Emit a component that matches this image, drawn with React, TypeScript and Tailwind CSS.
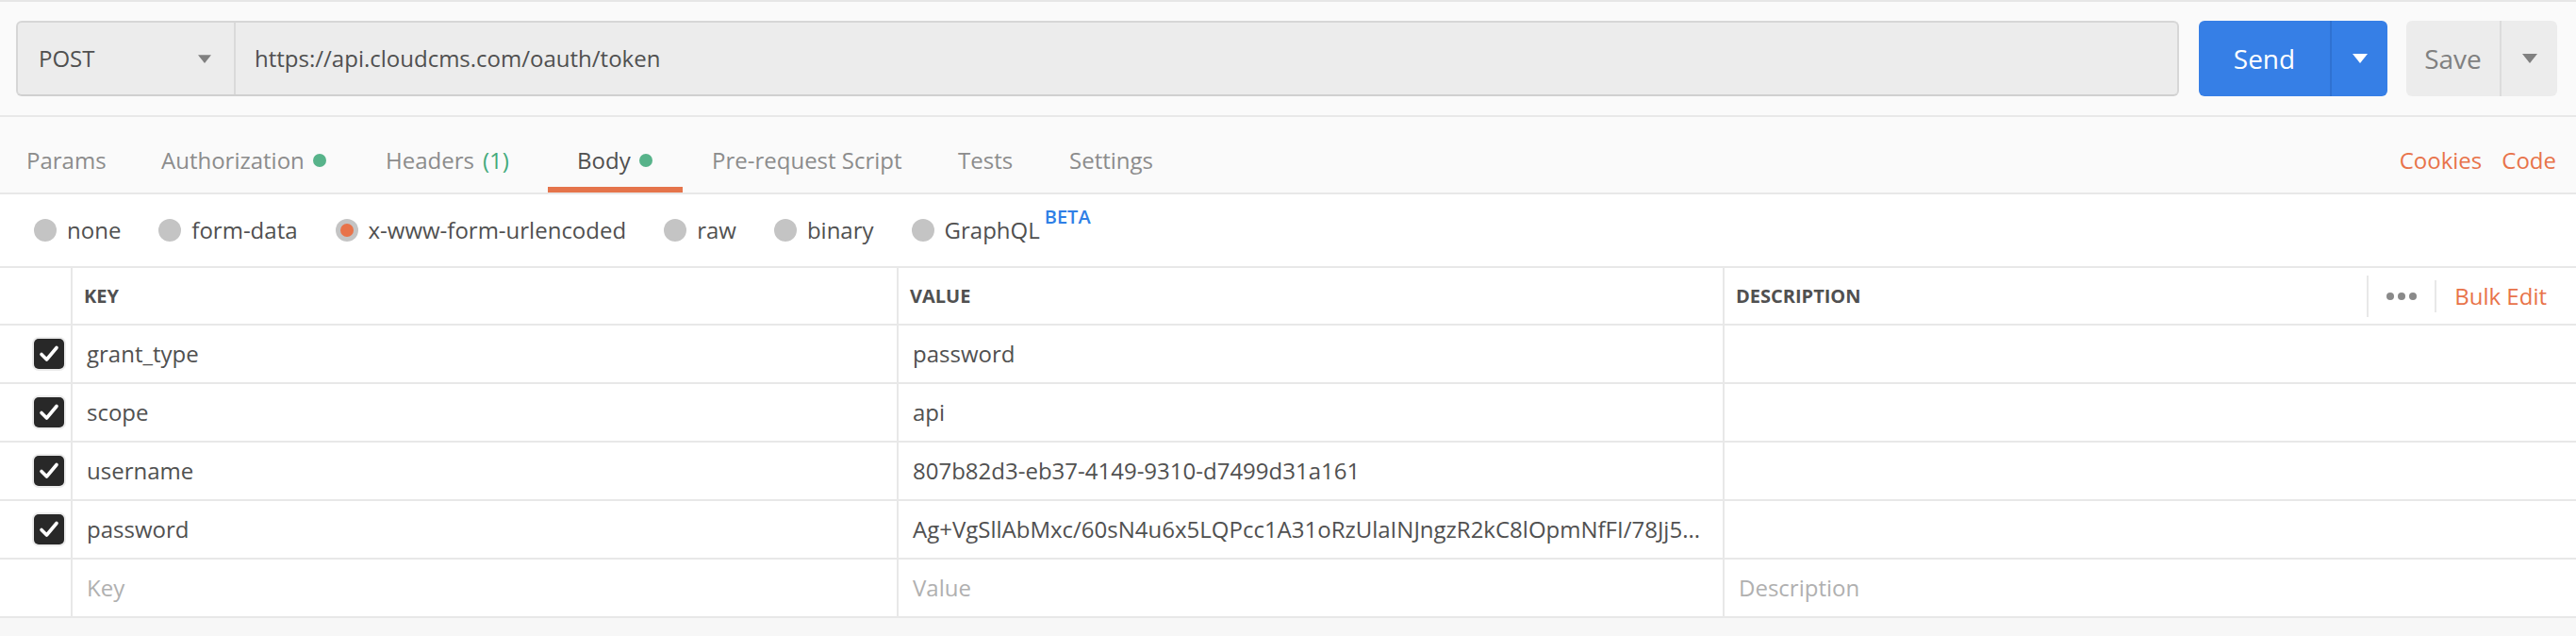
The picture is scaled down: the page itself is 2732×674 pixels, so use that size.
import React from "react";

const Tri = ({ color, w = 16, h = 10 }: { color: string; w?: number; h?: number }) => (
  <svg width={w} height={h} viewBox="0 0 16 10">
    <polygon points="0,0 16,0 8,10" fill={color} />
  </svg>
);

const Check = () => (
  <div className="w-[32px] h-[32px] rounded-[5px] bg-[#282828] ring-2 ring-[#ececec] flex items-center justify-center">
    <svg width="22" height="20" viewBox="0 0 22 20">
      <polyline points="3,10.5 8.5,16 19,3.5" fill="none" stroke="#ffffff" strokeWidth="3.6" strokeLinecap="round" strokeLinejoin="round" />
    </svg>
  </div>
);

const Radio = ({ label, selected, beta }: { label: string; selected?: boolean; beta?: boolean }) => (
  <div className="flex items-center mr-[40px]">
    <div className="w-[24px] h-[24px] rounded-full bg-[#c4c4c4] flex items-center justify-center">
      {selected && <div className="w-[14px] h-[14px] rounded-full bg-[#e8734a]" />}
    </div>
    <span className="ml-[11px] text-[24px] leading-[32px] text-[#505050]">{label}</span>
    {beta && (
      <span className="ml-[5px] self-start -mt-[10px] text-[20px] leading-[24px] font-semibold text-[#2f7fe6]">BETA</span>
    )}
  </div>
);

const Tab = ({
  label,
  active,
  dot,
  count,
  w,
}: {
  label: string;
  active?: boolean;
  dot?: boolean;
  count?: string;
  w: string;
}) => (
  <div
    className={`${w} h-[80px] pl-[31px] pt-[30px] flex items-start whitespace-nowrap border-b-[6px] ${
      active ? "border-[#e5744b]" : "border-transparent"
    }`}
  >
    <span className={`text-[24px] leading-[32px] ${active ? "text-[#505050]" : "text-[#8c8c8c]"}`}>{label}</span>
    {count && <span className="ml-[9px] text-[24px] leading-[32px] text-[#44aa7c]">{count}</span>}
    {dot && <span className="ml-[9px] mt-[9px] w-[14px] h-[14px] rounded-full bg-[#57b38a]" />}
  </div>
);

const rows = [
  { k: "grant_type", v: "password" },
  { k: "scope", v: "api" },
  { k: "username", v: "807b82d3-eb37-4149-9310-d7499d31a161" },
  { k: "password", v: "Ag+VgSllAbMxc/60sN4u6x5LQPcc1A31oRzUlaINJngzR2kC8lOpmNfFI/78Jj5..." },
];

export default function App() {
  return (
    <div className="w-[2732px] h-[674px] overflow-hidden bg-[#fafafa] border-t-2 border-[#e6e6e6] font-['Open_Sans',sans-serif]">
      {/* URL row */}
      <div className="h-[122px] flex items-center pl-[17px] pr-[20px] border-b-2 border-[#e8e8e8]">
        <div className="flex-1 h-[80px] flex rounded-[6px] border-2 border-[#d6d6d6] border-b-[#d0d0d0] bg-[#ececec]">
          <div className="w-[231px] flex items-center justify-between pl-[22px] pr-[24px] border-r-2 border-[#d9d9d9]">
            <span className="text-[24px] text-[#505050]">POST</span>
            <Tri color="#808080" w={14} h={9} />
          </div>
          <div className="flex items-center pl-[20px] text-[24px] text-[#505050]">https://api.cloudcms.com/oauth/token</div>
        </div>
        <div className="ml-[21px] w-[200px] h-[80px] flex rounded-[6px] bg-[#367fe6]">
          <div className="w-[139px] flex items-center justify-center text-[28px] text-white">Send</div>
          <div className="flex-1 flex items-center justify-center border-l-2 border-[#2f72d2]">
            <Tri color="#ffffff" />
          </div>
        </div>
        <div className="ml-[20px] w-[160px] h-[80px] flex rounded-[6px] bg-[#ececec]">
          <div className="w-[99px] flex items-center justify-center text-[28px] text-[#808080]">Save</div>
          <div className="flex-1 flex items-center justify-center border-l-2 border-[#dcdcdc]">
            <Tri color="#808080" />
          </div>
        </div>
      </div>

      {/* Tabs */}
      <div className="h-[82px] flex items-start border-b-2 border-[#e8e8e8]">
        <div className="flex -ml-[3px]">
          <Tab w="w-[143px]" label="Params" />
          <Tab w="w-[238px]" label="Authorization" dot />
          <Tab w="w-[203px]" label="Headers" count="(1)" />
          <Tab w="w-[143px]" label="Body" active dot />
          <Tab w="w-[261px]" label="Pre-request Script" />
          <Tab w="w-[118px]" label="Tests" />
          <Tab w="w-[150px]" label="Settings" />
        </div>
        <div className="ml-auto flex pt-[30px] pr-[21px] text-[24px] leading-[32px] text-[#e8734a]">
          <span>Cookies</span>
          <span className="ml-[21px]">Code</span>
        </div>
      </div>

      {/* Body type radios */}
      <div className="h-[76px] bg-white flex items-center pl-[36px]">
        <Radio label="none" />
        <Radio label="form-data" />
        <Radio label="x-www-form-urlencoded" selected />
        <Radio label="raw" />
        <Radio label="binary" />
        <Radio label="GraphQL" beta />
      </div>

      {/* Table */}
      <div className="bg-white border-t-2 border-[#e8e8e8]">
        <div className="h-[61px] grid grid-cols-[77px_876px_876px_1fr] border-b-2 border-[#e8e8e8]">
          <div className="border-r-2 border-[#e8e8e8]" />
          <div className="flex items-center pl-[12px] border-r-2 border-[#e8e8e8] text-[20px] font-bold text-[#505050]">KEY</div>
          <div className="flex items-center pl-[12px] border-r-2 border-[#e8e8e8] text-[20px] font-bold text-[#505050]">VALUE</div>
          <div className="flex items-center pl-[12px] pr-[31px]">
            <span className="text-[20px] font-bold text-[#505050]">DESCRIPTION</span>
            <div className="ml-auto flex items-center">
              <div className="w-[2px] h-[44px] bg-[#e8e8e8]" />
              <div className="ml-[19px] flex gap-[4px]">
                <span className="w-[8px] h-[8px] rounded-full bg-[#8a8a8a]" />
                <span className="w-[8px] h-[8px] rounded-full bg-[#8a8a8a]" />
                <span className="w-[8px] h-[8px] rounded-full bg-[#8a8a8a]" />
              </div>
              <div className="ml-[19px] w-[2px] h-[34px] bg-[#e8e8e8]" />
              <span className="ml-[19px] text-[24px] text-[#e8734a]">Bulk Edit</span>
            </div>
          </div>
        </div>
        {rows.map((r) => (
          <div key={r.k} className="h-[62px] grid grid-cols-[77px_876px_876px_1fr] border-b-2 border-[#e8e8e8]">
            <div className="flex items-center pl-[36px] border-r-2 border-[#e8e8e8]">
              <Check />
            </div>
            <div className="flex items-center pl-[15px] border-r-2 border-[#e8e8e8] text-[24px] text-[#505050]">{r.k}</div>
            <div className="flex items-center pl-[15px] border-r-2 border-[#e8e8e8] text-[24px] text-[#505050] whitespace-nowrap overflow-hidden">{r.v}</div>
            <div />
          </div>
        ))}
        <div className="h-[62px] grid grid-cols-[77px_876px_876px_1fr] border-b-2 border-[#e8e8e8]">
          <div className="border-r-2 border-[#e8e8e8]" />
          <div className="flex items-center pl-[15px] border-r-2 border-[#e8e8e8] text-[24px] text-[#b0b0b0]">Key</div>
          <div className="flex items-center pl-[15px] border-r-2 border-[#e8e8e8] text-[24px] text-[#b0b0b0]">Value</div>
          <div className="flex items-center pl-[15px] text-[24px] text-[#b0b0b0]">Description</div>
        </div>
      </div>
      <div className="h-[40px] bg-[#f7f7f7]" />
    </div>
  );
}
